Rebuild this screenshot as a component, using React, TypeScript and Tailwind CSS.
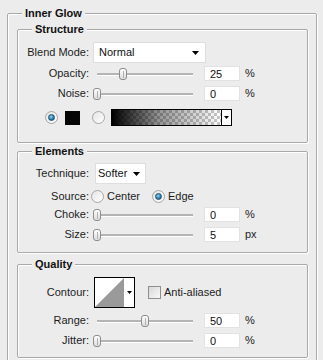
import React from 'react';

const font = "font-['Liberation_Sans',Arial,sans-serif]";

function Group({ title, className = '', children }: { title: string; className?: string; children: React.ReactNode }) {
    return (
        <div className={`border border-[#a9a9a9] rounded-[2px] shadow-[inset_1px_1px_0_#fff,1px_1px_0_#fff] ${className}`}>
            <div className="-mt-[7px] ml-[14px] w-fit px-[3px] bg-[#ececec] font-bold text-[11px] leading-[13px] text-[#111]">{title}</div>
            {children}
        </div>
    );
}

const Label = ({ children }: { children: React.ReactNode }) => (
    <div className="w-[71px] shrink-0 text-right text-[11px] leading-[13px] text-[#1c1c1c]">{children}</div>
);

const Arrow = () => (
    <svg width="7" height="4" viewBox="0 0 7 4">
        <path d="M0 0H7L3.5 4Z" fill="#000" />
    </svg>
);

function Slider({ value }: { value: number }) {
    return (
        <div className="relative ml-[4px] w-[104px] h-[15px] shrink-0">
            <div className="absolute left-[4px] right-[4px] top-[7px] h-[2px] bg-[#b4b4b4] shadow-[0_1px_0_#fff]" />
            <div
                className="absolute top-[2px] w-[8px] h-[12px] rounded-[3px] border border-[#8c8c8c] bg-[linear-gradient(to_bottom,#fff,#dcdcdc)] flex justify-center"
                style={{ left: Math.round(value * 0.96) }}
            >
                <div className="mt-[2px] w-px h-[7px] bg-[#b0b0b0]" />
            </div>
        </div>
    );
}

function NumField({ value, unit }: { value: string; unit: string }) {
    return (
        <>
            <div className="ml-[7px] w-[36px] h-[15px] bg-white border border-[#e2e2e2] pl-[5px] text-[11px] leading-[14px] text-[#111]">{value}</div>
            <div className="ml-[5px] text-[11px] leading-[13px] text-[#222]">{unit}</div>
        </>
    );
}

function SliderRow({ label, value, text, unit, className = '' }: { label: string; value: number; text: string; unit: string; className?: string }) {
    return (
        <div className={`flex items-center h-[15px] ${className}`}>
            <Label>{label}</Label>
            <Slider value={value} />
            <NumField value={text} unit={unit} />
        </div>
    );
}

function Radio({ checked }: { checked?: boolean }) {
    return (
        <div className="w-[13px] h-[13px] shrink-0 rounded-full border border-[#a6a6a6] bg-[linear-gradient(135deg,#e4e4e4,#fff)] flex items-center justify-center">
            {checked && <div className="w-[7px] h-[7px] rounded-full bg-[radial-gradient(circle_at_40%_35%,#8fd3f0,#1c6f9c_70%)] border border-[#1a4f70]" />}
        </div>
    );
}

export default function App() {
    return (
        <div className={`w-[323px] h-[360px] overflow-hidden bg-[#ececec] pl-[7px] pt-[13px] ${font}`}>
            <Group title="Inner Glow" className="w-[310px] pb-[10px]">
                <Group title="Structure" className="ml-[9px] mt-[9px] w-[291px] pb-[16px]">
                    <div className="flex items-center h-[21px] mt-[6px]">
                        <Label>Blend Mode:</Label>
                        <div className="ml-[4px] w-[113px] h-[21px] bg-white border border-[#dedede] flex items-center justify-between pl-[5px] pr-[6px] text-[11px] text-[#111]">
                            <span>Normal</span>
                            <Arrow />
                        </div>
                    </div>
                    <SliderRow label="Opacity:" value={27} text="25" unit="%" className="mt-[3px]" />
                    <SliderRow label="Noise:" value={0} text="0" unit="%" className="mt-[5px]" />
                    <div className="flex items-center h-[17px] mt-[8px]">
                        <div className="ml-[27px]"><Radio checked /></div>
                        <div className="ml-[7px] w-[15px] h-[14px] bg-[#050505]" />
                        <div className="ml-[12px]"><Radio /></div>
                        <div className="ml-[6px] w-[121px] h-[17px] border border-black flex">
                            <div className="flex-1 bg-[linear-gradient(to_right,#000,rgba(0,0,0,0.4)_45%,rgba(0,0,0,0)),repeating-conic-gradient(#c8c8c8_0_25%,#fff_0_50%)] [background-size:100%_100%,6px_6px]" />
                            <div className="w-[10px] border-l border-black bg-white flex items-center justify-center">
                                <svg width="5" height="3" viewBox="0 0 5 3"><path d="M0 0H5L2.5 3Z" fill="#000" /></svg>
                            </div>
                        </div>
                    </div>
                </Group>

                <Group title="Elements" className="ml-[9px] mt-[8px] w-[291px] pb-[10px]">
                    <div className="flex items-center h-[21px] mt-[5px]">
                        <Label>Technique:</Label>
                        <div className="ml-[6px] w-[51px] h-[21px] bg-white border border-[#dedede] flex items-center justify-between pl-[2px] pr-[5px] text-[11px] text-[#111]">
                            <span>Softer</span>
                            <Arrow />
                        </div>
                    </div>
                    <div className="flex items-center h-[15px] mt-[5px] text-[11px] leading-[13px] text-[#1c1c1c]">
                        <Label>Source:</Label>
                        <div className="ml-[2px]"><Radio /></div>
                        <span className="ml-[3px]">Center</span>
                        <div className="ml-[12px]"><Radio checked /></div>
                        <span className="ml-[3px]">Edge</span>
                    </div>
                    <SliderRow label="Choke:" value={0} text="0" unit="%" className="mt-[3px]" />
                    <SliderRow label="Size:" value={0} text="5" unit="px" className="mt-[5px]" />
                </Group>

                <Group title="Quality" className="ml-[9px] mt-[11px] w-[291px] pb-[9px]">
                    <div className="flex items-center h-[31px] mt-[6px]">
                        <Label>Contour:</Label>
                        <div className="ml-[5px] w-[41px] h-[31px] border border-black bg-white flex">
                            <svg width="29" height="29" viewBox="0 0 29 29" className="shrink-0">
                                <path d="M0 29L29 0V29Z" fill="#9a9a9a" />
                            </svg>
                            <div className="flex-1 flex items-center justify-center">
                                <svg width="5" height="3" viewBox="0 0 5 3"><path d="M0 0H5L2.5 3Z" fill="#000" /></svg>
                            </div>
                        </div>
                        <div className="ml-[13px] w-[13px] h-[13px] border border-[#8f8f8f] bg-[linear-gradient(135deg,#d8d8d8,#f8f8f8)]" />
                        <span className="ml-[3px] text-[11px] leading-[13px] text-[#1c1c1c]">Anti-aliased</span>
                    </div>
                    <SliderRow label="Range:" value={50} text="50" unit="%" className="mt-[5px]" />
                    <SliderRow label="Jitter:" value={0} text="0" unit="%" className="mt-[5px]" />
                </Group>
            </Group>
        </div>
    );
}
